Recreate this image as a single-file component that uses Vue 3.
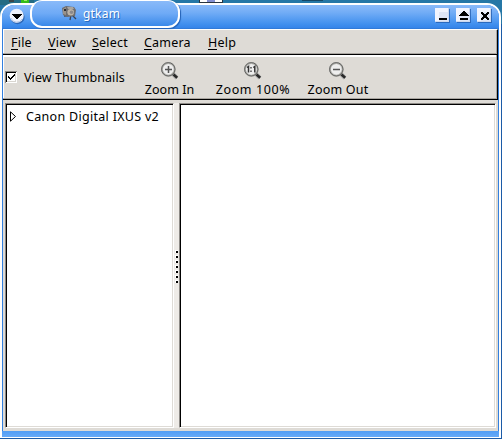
<script setup>
const menus = [
  { key: 'F', rest: 'ile', width: 37 },
  { key: 'V', rest: 'iew', width: 44 },
  { key: 'S', rest: 'elect', width: 52 },
  { key: 'C', rest: 'amera', width: 64 },
  { key: 'H', rest: 'elp', width: 40 },
]
const tools = [
  { label: 'Zoom In', kind: 'in', cls: 'in' },
  { label: 'Zoom 100%', kind: 'one', cls: 'one' },
  { label: 'Zoom Out', kind: 'out', cls: 'out' },
]
</script>

<template>
  <div class="desktop">
    <svg class="backdrop" width="502" height="5" shape-rendering="crispEdges">
      <rect width="502" height="5" fill="#2577a6" />
      <rect width="34" height="5" fill="#246c83" />
      <rect x="9" width="5" height="2" fill="#3b4547" />
      <rect x="21" width="8" height="3" fill="#35bd18" />
      <rect x="24" width="3" height="1" fill="#a2ed62" />
      <rect x="199" width="24" height="3" fill="#28343f" />
      <rect x="200" width="22" height="2" fill="#fff" />
      <rect x="207" width="8" height="2" fill="#8490d2" />
      <rect x="302" width="21" height="1" fill="#164866" />
    </svg>
    <div class="window">
      <header class="titlebar">
        <svg class="round" width="16" height="17" viewBox="0 0 16 17">
          <circle cx="8.5" cy="9" r="7.2" fill="#1e519b" opacity=".65" />
          <circle cx="7.7" cy="7.8" r="7" fill="#edf1fc" />
          <path d="M2 10a6 6 0 0 0 11 1" fill="none" stroke="#b7c8e6" />
          <path d="M3 6h10v1h-1v1h-1v1h-1v1H9v1H7v-1H6V9H5V8H4V7H3z" shape-rendering="crispEdges" />
        </svg>
        <div class="controls">
          <svg v-for="k in 3" :key="k" width="15" height="15" shape-rendering="crispEdges">
            <rect x="1" y="1" width="14" height="14" fill="#205bae" opacity=".75" />
            <rect width="14" height="14" fill="#ccd9ef" />
            <rect width="13" height="13" fill="#f2f4fd" />
            <rect x="4" y="4" width="9" height="9" fill="#dfe5f5" />
            <path v-if="k === 1" d="M4 10h8v2H4z" />
            <path v-if="k === 2" d="M7 3h2v1h1v1h1v1h1v1h1v1H3V7h1V6h1V5h1V4h1zM4 10h8v2H4z" />
            <path v-if="k === 3" d="M4 4h2v1h1v1h2V5h1V4h2v2h-1v1h-1v2h1v1h1v2h-2v-1H9v-1H7v1H6v1H4v-2h1V9h1V7H5V6H4z" />
          </svg>
        </div>
      </header>
      <nav class="menubar">
        <span v-for="m in menus" :key="m.key" :style="{ width: m.width + 'px' }"><u>{{ m.key }}</u>{{ m.rest }}</span>
      </nav>
      <section class="toolbar">
        <label class="check">
          <svg width="12" height="12" shape-rendering="crispEdges">
            <rect width="12" height="12" fill="#fff" />
            <path d="M0 0h12v1H1v11H0z" fill="#8b8a86" />
            <path d="M1 1h10v1H2v9H1z" />
            <path d="M10.5 2v8.5H2" fill="none" stroke="#d8d5cf" />
            <path d="M3 5h1v1h1v1h1V6h1V5h1V4h1V3h1v2H9v1H8v1H7v1H6v1H5V8H4V7H3z" />
          </svg>
          <span>View Thumbnails</span>
        </label>
        <div v-for="t in tools" :key="t.kind" class="tool" :class="t.cls">
          <svg width="20" height="20" viewBox="0 0 20 20">
            <path d="M13 13l4 4" stroke="#aaa" stroke-width="4" />
            <path d="M13.2 13.2l4 3.5" stroke="#282828" stroke-width="2.5" />
            <circle cx="8.3" cy="8.3" r="6.4" fill="#eee" stroke="#b0b0ac" stroke-width="2" />
            <circle cx="8.3" cy="8.3" r="6.7" fill="none" stroke="#50504f" stroke-width=".8" />
            <path v-if="t.kind !== 'one'" d="M5 8.5h7" stroke="#555" stroke-width="1.5" />
            <path v-if="t.kind === 'in'" d="M8.5 5v7" stroke="#555" stroke-width="1.5" />
            <path v-if="t.kind === 'one'" d="M4 6.5l1.5-1v6M10.3 6.5l1.5-1v6" fill="none" stroke="#333" stroke-width="1.5" />
            <path v-if="t.kind === 'one'" d="M8 6v1.5M8 9.5V11" stroke="#333" stroke-width="1.3" />
          </svg>
          <span>{{ t.label }}</span>
        </div>
      </section>
      <main class="panes">
        <div class="pane tree">
          <svg width="7" height="11" viewBox="0 0 7 11"><path d="M.5.8v9.4L5.5 5.5z" fill="#fff" stroke="#000" /></svg>
          <span>Canon Digital IXUS v2</span>
        </div>
        <div class="splitter"><i v-for="n in 7" :key="n" /></div>
        <div class="pane view"></div>
      </main>
      <footer class="resize"></footer>
    </div>
    <div class="tab">
      <svg width="17" height="16" viewBox="0 0 17 16">
        <path d="M3 11l8-1 4 4M10 10l-1 5" stroke="#3c4656" stroke-width="1.3" fill="none" />
        <path d="M1 3l4-2 8 1 2 3-1 6-8 1-4-2z" fill="#6d6d70" />
        <path d="M2 4l3-2v8l-3-1z" fill="#99928a" />
        <path d="M6 2h6l1 2H7z" fill="#aaa59e" />
        <circle cx="9.7" cy="7.2" r="3.3" fill="#bcb4a8" />
        <circle cx="10.5" cy="7.2" r="1.8" fill="#8b898c" />
        <path d="M3 4h2v2H3z" fill="#292b32" />
      </svg>
      <span>gtkam</span>
    </div>
  </div>
</template>

<style>
body { overflow: hidden; }
</style>

<style scoped>
* { box-sizing: border-box; }
.desktop {
  position: relative;
  width: 502px;
  height: 439px;
  overflow: hidden;
  background: #1c5ba7;
  font-family: "Noto Sans", "Open Sans", sans-serif;
  font-size: 12.5px;
  line-height: 16px;
  color: #000;
  white-space: nowrap;
}
.desktop svg { display: block; flex: none; }
.backdrop { position: absolute; top: 0; left: 0; }
.desktop::before {
  content: "";
  position: absolute;
  inset: 0 0 auto;
  height: 24px;
  background: #2577a6;
}
.window {
  position: relative;
  display: flex;
  flex-direction: column;
  width: 501px;
  height: 435px;
  margin-top: 3px;
  float: left;
  border: solid #fff;
  border-width: 2px 2px 1px;
  border-radius: 14px 14px 0 0;
  background: #3380df;
  overflow: hidden;
}
.titlebar {
  display: flex;
  justify-content: space-between;
  height: 24px;
  flex: none;
  padding: 3px 7px 0 7px;
  background: linear-gradient(#8abaf9, #73adf6 30%, #408fee 80%, #3584e9 96%, #2b70c7);
}
.controls { display: flex; gap: 6px; }
.menubar {
  display: flex;
  height: 26px;
  flex: none;
  width: 495px;
  margin-left: 1px;
  padding: 5px 0 0 8px;
  background: #dedbd6;
  border: solid #000;
  border-width: 1px 1px 1px 0;
  border-top-color: #fff;
  box-shadow: inset -1px -1px #aaa6a1, inset 1px 0 #fff;
  letter-spacing: .2px;
}
.menubar u { text-decoration: none; border-bottom: 1px solid #000; display: inline-block; height: 15px; line-height: 16px; }
.toolbar {
  display: flex;
  height: 45px;
  flex: none;
  width: 495px;
  margin-left: 1px;
  background: #dedbd6;
  border: solid #000;
  border-width: 0 1px 1px 0;
  box-shadow: inset -1px -1px #aaa6a1, inset 1px 2px #fff;
}
.check { display: flex; padding: 16px 0 0 2px; width: 139px; }
.check span { margin: -1px 0 0 7px; letter-spacing: .08px; }
.tool { display: flex; flex-direction: column; align-items: center; padding-top: 6px; }
.tool span { margin-top: 1px; }
.in { width: 55px; letter-spacing: .05px; }
.one { margin-left: 10px; width: 92px; letter-spacing: .6px; }
.out { margin-left: 3px; width: 72px; letter-spacing: .2px; }
.tool svg { margin-left: 0; }
.panes {
  display: flex;
  flex: 1;
  width: 495px;
  margin-left: 1px;
  padding: 3px 1px 3px 2px;
  background: #dedbd6;
}
.pane {
  height: 325px;
  background: #fff;
  border: 1px solid #fff;
  border-top-color: #8d8a86;
  border-left-color: #8d8a86;
  box-shadow: inset 1px 1px #000, inset -1px -1px #dedbd6;
}
.tree { display: flex; width: 169px; padding: 5px 0 0 4px; }
.tree svg { margin-top: 2px; }
.tree span { margin-left: 9px; letter-spacing: .3px; }
.splitter {
  width: 5px;
  display: flex;
  flex-direction: column;
  align-items: flex-end;
  gap: 2px;
  padding: 147px 1px 0 0;
  background: #eeebe7;
}
.splitter i {
  width: 3px;
  height: 3px;
  background: linear-gradient(#000, #000) 1px 1px / 2px 2px no-repeat #fff;
}
.view { width: 317px; }
.resize { height: 6px; flex: none; background: linear-gradient(#519df5, #66aaf8); }
.tab {
  position: absolute;
  left: 30px;
  top: 0;
  width: 150px;
  height: 28px;
  display: flex;
  padding: 4px 0 0 29px;
  border: 2px solid #fff;
  border-width: 1px 2px 2px;
  border-radius: 12px;
  background: linear-gradient(#8abaf9, #6eaaf6 50%, #3988e9);
  box-shadow: 1px 1px 1px #2260b4;
  color: #fff;
}
.tab span { margin: 1px 0 0 5px; font-size: 12px; letter-spacing: .2px; text-shadow: 1px 1px #286bbf; }
</style>
